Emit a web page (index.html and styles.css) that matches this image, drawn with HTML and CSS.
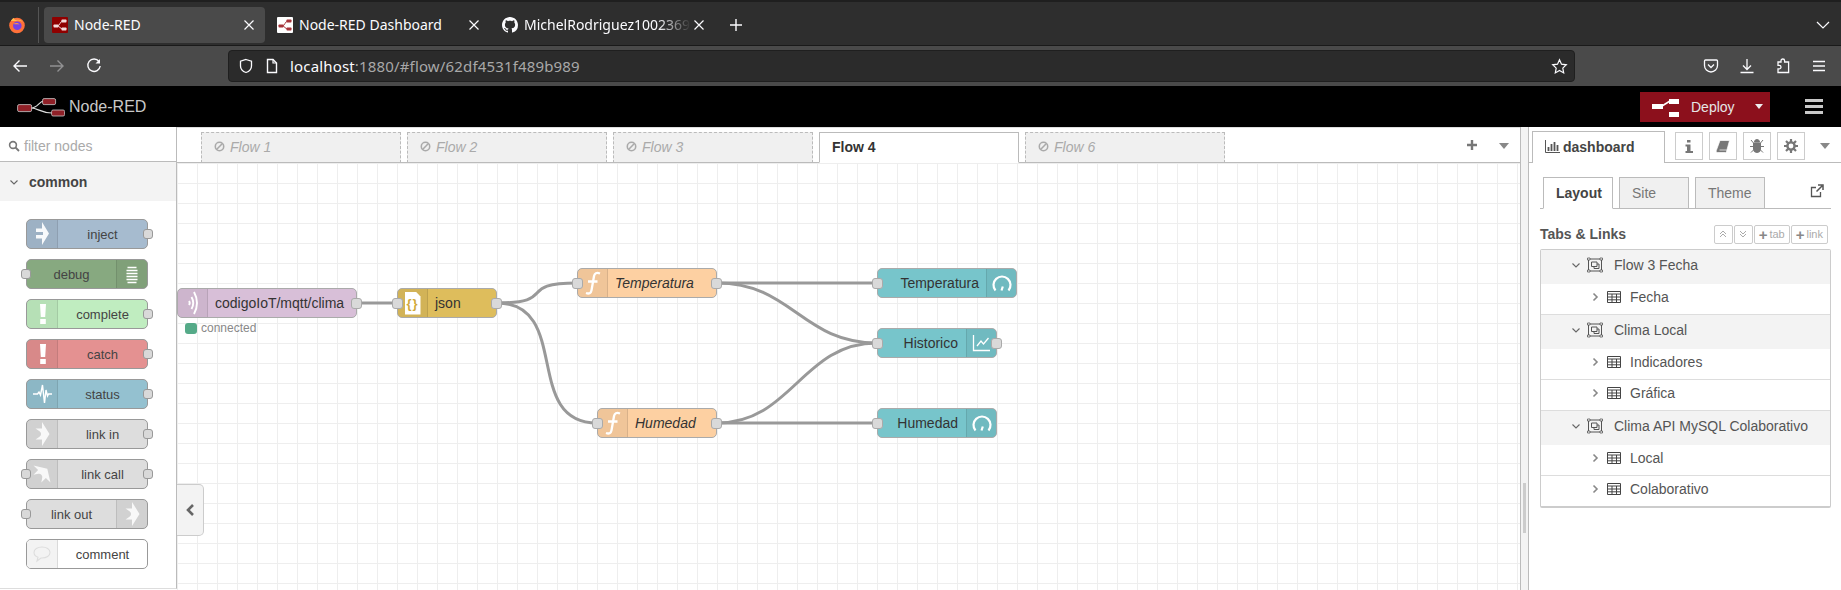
FILE: index.html
```html
<!DOCTYPE html>
<html lang="en">
<head>
  <meta charset="UTF-8">
  <meta name="viewport" content="width=device-width, initial-scale=1.0">
  <title>Node-RED</title>
  <link rel="stylesheet" href="styles.css">
</head>
<body>
  <svg class="defs" width="0" height="0">
    <symbol id="i-close" viewBox="0 0 16 16"><path d="M3.500 3.500l9 9M12.500 3.500l-9 9" fill="none" stroke="currentColor" stroke-width="1.200"/></symbol>
    <symbol id="i-nr" viewBox="0 0 16 16"><path d="M5 9c3 0 3-5 6-5M5 9c3 0 3 3 6 3" fill="none" stroke="currentColor" stroke-width="1"/><rect x="1.500" y="7.500" width="5" height="3" rx=".7" fill="currentColor"/><rect x="9.500" y="2.500" width="5" height="3" rx=".7" fill="currentColor"/><rect x="9.500" y="10.500" width="5" height="3" rx=".7" fill="currentColor"/></symbol>
    <symbol id="i-inject" viewBox="0 0 30 30"><path d="M15 3l7 11.500L15 26v-6.500H9V16h7v-3H9V9.500h6z" fill="#fff" opacity=".92"/></symbol>
    <symbol id="i-link" viewBox="0 0 30 30"><path d="M15 3l7.500 12L15 27v-6.500H8.500l4-2.700a3.300 3.300 0 0 0 0-5.600l-4-2.700H15z" fill="#fff" opacity=".85"/></symbol>
    <symbol id="i-bang" viewBox="0 0 30 30"><path d="M13 5h6l-.8 13h-4.400zM13.200 20h5.600v5h-5.600z" fill="#fff"/></symbol>
    <symbol id="i-func" viewBox="0 0 30 30"><path d="M22 5.500c-3.500-1.300-5.500-.3-6 2.700l-2.500 14c-.5 3-2.500 4-5.500 2.800M10 13.500h9.500" fill="none" stroke="#fff" stroke-width="2.300"/></symbol>
    <symbol id="i-gauge" viewBox="0 0 30 30"><path d="M8.500 22.500a8.500 8.500 0 1 1 13 0M14.500 22.500l1.300-4" fill="none" stroke="#fff" stroke-width="2.200"/></symbol>
    <symbol id="i-off" viewBox="0 0 12 12"><circle cx="6" cy="6" r="4.600" fill="none" stroke="#aaa" stroke-width="1.700"/><path d="M2.800 9.200l6.400-6.400" stroke="#aaa" stroke-width="1.700"/></symbol>
    <symbol id="i-down" viewBox="0 0 10 10"><path d="M1.500 3.500L5 7l3.500-3.500" fill="none" stroke="#666" stroke-width="1.100"/></symbol>
    <symbol id="i-right" viewBox="0 0 10 10"><path d="M3.500 1.500L7 5 3.500 8.500" fill="none" stroke="#888" stroke-width="1.600"/></symbol>
    <symbol id="i-group" viewBox="0 0 16 16"><path d="M1.500 2h13v12h-13z" fill="none" stroke="#555"/><path d="M4.500 5h5.500v4.500H4.500zM7 9.500V11.500h5V7h-2" fill="none" stroke="#555"/><path d="M.5 1h2.500v2H.5zM13 1h2.500v2H13zM.5 13h2.500v2H.5zM13 13h2.500v2H13z" fill="#fff" stroke="#555" stroke-width=".8"/></symbol>
    <symbol id="i-table" viewBox="0 0 14 12"><path d="M.5.500h13v11H.5zM.5 3h13M.5 6h13M.5 8.800h13M5 3v8.500M9.500 3v8.500" fill="none" stroke="#444" stroke-width="1"/></symbol>
  </svg>

  <div class="tabbar">
    <div class="ff-box">
      <svg width="18" height="18" viewBox="0 0 18 18"><circle cx="9" cy="9.500" r="7.800" fill="#ff7139"/><path d="M3 5c1-2 2-3 3-3 0 1 1 2 2 2 3-1 6 0 7.500 3C14 5 11 4 8 5z" fill="#ffbd4f"/><circle cx="9.300" cy="9.800" r="4.300" fill="#7542e5"/><path d="M5.500 8c2-1.500 5-1 6 .5-2-.5-4 0-6-.5z" fill="#ff9640"/></svg>
    </div>
    <div class="tab tab-active">
      <svg class="favicon fav-red" width="16" height="16"><use href="#i-nr"/></svg>
      <span class="tab-title">Node-RED</span>
      <svg class="tab-x" width="16" height="16"><use href="#i-close"/></svg>
    </div>
    <div class="tab">
      <svg class="favicon fav-white" width="16" height="16"><use href="#i-nr"/></svg>
      <span class="tab-title">Node-RED Dashboard</span>
      <svg class="tab-x" width="16" height="16"><use href="#i-close"/></svg>
    </div>
    <div class="tab">
      <svg class="favicon" width="16" height="16" viewBox="0 0 16 16"><path fill="#fbfbfe" d="M8 0C3.580 0 0 3.580 0 8c0 3.540 2.290 6.530 5.470 7.590.4.070.55-.17.55-.38 0-.19-.01-.82-.01-1.490-2.010.37-2.530-.49-2.690-.94-.09-.23-.48-.94-.82-1.130-.28-.15-.68-.52-.01-.53.63-.01 1.080.58 1.230.82.72 1.210 1.870.87 2.330.66.070-.52.28-.87.51-1.070-1.780-.2-3.640-.89-3.640-3.950 0-.87.31-1.590.82-2.150-.08-.2-.36-1.020.08-2.120 0 0 .67-.21 2.200.82.64-.18 1.320-.27 2-.27.68 0 1.360.09 2 .27 1.530-1.040 2.200-.82 2.200-.82.44 1.100.16 1.920.08 2.120.51.56.82 1.270.82 2.150 0 3.070-1.870 3.750-3.650 3.950.29.25.54.73.54 1.480 0 1.070-.01 1.930-.01 2.200 0 .21.15.46.55.38A8.013 8.013 0 0016 8c0-4.420-3.580-8-8-8z"/></svg>
      <span class="tab-title tab-fade">MichelRodriguez1002369</span>
      <svg class="tab-x" width="16" height="16"><use href="#i-close"/></svg>
    </div>
    <svg class="new-tab" width="16" height="16" viewBox="0 0 16 16"><path d="M8 2v12M2 8h12" stroke="#fbfbfe" stroke-width="1.400"/></svg>
    <svg class="all-tabs" width="16" height="16" viewBox="0 0 16 16"><path d="M2 5l6 6 6-6" fill="none" stroke="#fbfbfe" stroke-width="1.200"/></svg>
  </div>

  <div class="navbar">
    <svg class="nav-ic" width="16" height="16" viewBox="0 0 16 16"><path d="M15 8H2M7.500 2.500L2 8l5.500 5.500" fill="none" stroke="#fbfbfe" stroke-width="1.400"/></svg>
    <svg class="nav-ic dim" width="16" height="16" viewBox="0 0 16 16"><path d="M1 8h13M8.500 2.500L14 8l-5.500 5.500" fill="none" stroke="#fbfbfe" stroke-width="1.400"/></svg>
    <svg class="nav-ic" width="16" height="16" viewBox="0 0 16 16"><path d="M13 3.500A6.200 6.200 0 1 0 14.200 8" fill="none" stroke="#fbfbfe" stroke-width="1.400"/><path d="M14 1v4.500H9.500z" fill="#fbfbfe"/></svg>
    <div class="urlbar">
      <svg class="url-shield" width="16" height="16" viewBox="0 0 16 16"><path d="M8 1.500l5.500 1.700V8c0 3.300-2.500 5.500-5.500 6.500C5 13.500 2.500 11.300 2.500 8V3.200z" fill="none" stroke="#fbfbfe" stroke-width="1.300"/></svg>
      <svg class="url-page" width="14" height="16" viewBox="0 0 14 16"><path d="M2.500 1.500h5.500l3.500 3.500v9.500h-9z" fill="none" stroke="#fbfbfe" stroke-width="1.400"/><path d="M8 1.500v3.500h3.500" fill="none" stroke="#fbfbfe" stroke-width="1.200"/></svg>
      <span class="url-text">localhost<span class="url-dim">:1880/#flow/62df4531f489b989</span></span>
      <svg class="url-star" width="17" height="17" viewBox="0 0 17 17"><path d="M8.500 1.800l2 4.400 4.800.6-3.500 3.300.9 4.800-4.200-2.400-4.200 2.400.9-4.800L1.700 6.800l4.800-.6z" fill="none" stroke="#fbfbfe" stroke-width="1.200"/></svg>
    </div>
    <div class="nav-right">
      <svg width="16" height="16" viewBox="0 0 16 16"><path d="M2.500 2h11c.6 0 1 .4 1 1v4.500c0 3.500-3 6.500-6.500 6.500s-6.500-3-6.500-6.500V3c0-.6.4-1 1-1z" fill="none" stroke="#fbfbfe" stroke-width="1.300"/><path d="M5 6.500l3 3 3-3" fill="none" stroke="#fbfbfe" stroke-width="1.300"/></svg>
      <svg width="16" height="16" viewBox="0 0 16 16"><path d="M8 1v10M4 7.500L8 11.500l4-4M1.500 14.500h13" fill="none" stroke="#fbfbfe" stroke-width="1.300"/></svg>
      <svg width="16" height="16" viewBox="0 0 16 16"><path d="M6 4V2.800a1.800 1.800 0 0 1 3.600 0V4h4v10.500H3v-3.600h1.200a1.800 1.800 0 0 0 0-3.600H3V4z" fill="none" stroke="#fbfbfe" stroke-width="1.300"/></svg>
      <svg width="16" height="16" viewBox="0 0 16 16"><path d="M2 3.500h12M2 8h12M2 12.500h12" stroke="#fbfbfe" stroke-width="1.300"/></svg>
    </div>
  </div>

  <header class="nr-header">
    <div class="logo">
      <svg width="48" height="20" viewBox="0 0 48 20"><path d="M14 11c7 0 8-7 13-7M14 11c7 0 10 5 21 5" fill="none" stroke="#ddd" stroke-width="1.200"/><rect x=".6" y="7.600" width="14" height="7" rx="1.500" fill="#8f2027" stroke="#ccc" stroke-width=".8"/><rect x="25.600" y="1.600" width="13" height="6" rx="1.500" fill="#8f2027" stroke="#ccc" stroke-width=".8"/><rect x="34.600" y="13" width="13" height="6" rx="1.500" fill="#8f2027" stroke="#ccc" stroke-width=".8"/></svg>
      <span>Node-RED</span>
    </div>
    <div class="deploy">
      <svg width="28" height="20" viewBox="0 0 28 20"><path d="M10 9l8-5" stroke="#fff" stroke-width="1.500"/><rect x="0" y="7" width="11" height="5" fill="#fff"/><rect x="17" y="2" width="10" height="5" fill="#fff"/><rect x="17" y="15" width="10" height="5" fill="#fff"/></svg>
      <span class="deploy-label">Deploy</span>
      <span class="deploy-caret"></span>
    </div>
    <div class="hamburger"><i></i><i></i><i></i></div>
  </header>

  <main class="app">
    <aside class="palette">
      <div class="filter">
        <svg width="12" height="12" viewBox="0 0 12 12"><circle cx="5" cy="5" r="3.400" fill="none" stroke="#777" stroke-width="1.600"/><path d="M7.500 7.500L11 11" stroke="#777" stroke-width="1.800"/></svg>
        <span>filter nodes</span>
      </div>
      <div class="cat-head">
        <svg width="10" height="10"><use href="#i-down"/></svg>
        <span>common</span>
      </div>
      <div class="cat-body">
        <div class="pnode c-inject"><span class="ic"><svg width="30" height="30"><use href="#i-inject"/></svg></span><span class="lbl">inject</span><b class="port out"></b></div>
        <div class="pnode c-debug"><b class="port in"></b><span class="lbl">debug</span><span class="ic ic-right"><svg width="30" height="30" viewBox="0 0 30 30"><path d="M10.500 8.500h9M9.500 11.500h11M9.500 14.500h11M9.500 17.500h11M9.500 20.500h11M10.500 23.500h9" stroke="#fff" stroke-width="1.500"/></svg></span></div>
        <div class="pnode c-complete"><span class="ic"><svg width="30" height="30"><use href="#i-bang"/></svg></span><span class="lbl">complete</span><b class="port out"></b></div>
        <div class="pnode c-catch"><span class="ic"><svg width="30" height="30"><use href="#i-bang"/></svg></span><span class="lbl">catch</span><b class="port out"></b></div>
        <div class="pnode c-status"><span class="ic"><svg width="30" height="30" viewBox="0 0 30 30"><path d="M6 15h4.500l1.500-2 1.500 3 2-10 2 18 1.500-13 1.500 6 1-2h3.500" fill="none" stroke="#fff" stroke-width="1.400"/></svg></span><span class="lbl">status</span><b class="port out"></b></div>
        <div class="pnode c-link"><span class="ic"><svg width="30" height="30"><use href="#i-link"/></svg></span><span class="lbl">link in</span><b class="port out"></b></div>
        <div class="pnode c-link"><b class="port in"></b><span class="ic"><svg class="rot" width="30" height="30"><use href="#i-link"/></svg></span><span class="lbl">link call</span><b class="port out"></b></div>
        <div class="pnode c-link"><b class="port in"></b><span class="lbl">link out</span><span class="ic ic-right"><svg width="30" height="30"><use href="#i-link"/></svg></span></div>
        <div class="pnode c-comment"><span class="ic"><svg width="30" height="30" viewBox="0 0 30 30"><path d="M15 8c4.500 0 8 2.300 8 5.500S19.500 19 15 19h-1l-4 3 1-3.800C8.500 17.300 7 15.600 7 13.500 7 10.300 10.500 8 15 8z" fill="none" stroke="#ddd" stroke-width="1.100"/></svg></span><span class="lbl">comment</span></div>
      </div>
    </aside>

    <section class="workspace">
      <div class="ws-tabs">
        <div class="ws-tab off"><svg width="11" height="11"><use href="#i-off"/></svg>Flow 1</div>
        <div class="ws-tab off"><svg width="11" height="11"><use href="#i-off"/></svg>Flow 2</div>
        <div class="ws-tab off"><svg width="11" height="11"><use href="#i-off"/></svg>Flow 3</div>
        <div class="ws-tab on">Flow 4</div>
        <div class="ws-tab off"><svg width="11" height="11"><use href="#i-off"/></svg>Flow 6</div>
        <svg class="ws-plus" width="12" height="12" viewBox="0 0 12 12"><path d="M6 1v10M1 6h10" stroke="#777" stroke-width="2.400"/></svg>
        <span class="caret ws-caret"></span>
      </div>
      <div class="canvas">
        <svg class="wires" width="1343" height="427" viewBox="177 163 1343 427">
          <path d="M357 303H397"/>
          <path d="M497 303C559 303 515 283 577 283"/>
          <path d="M497 303C572 303 522 423 597 423"/>
          <path d="M717 283H877"/>
          <path d="M717 283C792 283 802 343 877 343"/>
          <path d="M717 423C792 423 802 343 877 343"/>
          <path d="M717 423H877"/>
        </svg>

        <div class="fnode n-mqtt"><b class="port out"></b><span class="ic"><svg width="30" height="30" viewBox="0 0 30 30"><path d="M16 4q6 11 0 22M13.500 9q3.500 6 0 12M11 13q1.500 2 0 4" fill="none" stroke="#fff" stroke-width="1.900"/></svg></span><span class="lbl">codigoIoT/mqtt/clima</span></div>
        <div class="status"><i></i>connected</div>

        <div class="fnode n-json"><b class="port in"></b><b class="port out"></b><span class="ic"><span class="doc">{}</span></span><span class="lbl">json</span></div>

        <div class="fnode n-func n-temp"><b class="port in"></b><b class="port out"></b><span class="ic"><svg width="30" height="30"><use href="#i-func"/></svg></span><span class="lbl">Temperatura</span></div>
        <div class="fnode n-func n-hum"><b class="port in"></b><b class="port out"></b><span class="ic"><svg width="30" height="30"><use href="#i-func"/></svg></span><span class="lbl">Humedad</span></div>

        <div class="fnode n-ui n-gtemp"><b class="port in"></b><span class="lbl">Temperatura</span><span class="ic ic-right"><svg width="30" height="30"><use href="#i-gauge"/></svg></span></div>
        <div class="fnode n-ui n-hist"><b class="port in"></b><b class="port out"></b><span class="lbl">Historico</span><span class="ic ic-right"><svg width="30" height="30" viewBox="0 0 30 30"><path d="M6.500 7v15.500H23M10 18l4-5 2.500 3 5-6" fill="none" stroke="#fff" stroke-width="1.300"/></svg></span></div>
        <div class="fnode n-ui n-ghum"><b class="port in"></b><span class="lbl">Humedad</span><span class="ic ic-right"><svg width="30" height="30"><use href="#i-gauge"/></svg></span></div>

        <div class="palette-toggle">
          <svg width="10" height="14" viewBox="0 0 10 14"><path d="M8 2L3 7l5 5" fill="none" stroke="#666" stroke-width="2.600"/></svg>
        </div>
      </div>
    </section>

    <div class="separator"><i></i></div>

    <aside class="sidebar">
      <div class="side-tabs">
        <div class="side-tab">
          <svg width="15" height="13" viewBox="0 0 15 13"><path d="M.5 0v12.500H15" fill="none" stroke="#555" stroke-width="1"/><path d="M3.500 7v4M6.500 4v7M9.500 2v9M12.500 5v6" stroke="#555" stroke-width="1.800"/></svg>
          dashboard
        </div>
        <div class="side-btn"><svg width="8" height="13" viewBox="0 0 8 13"><path d="M2 0h3.500v2.500H2zM.5 4.500h5V11H8v2H.5v-2H2V6.500H.5z" fill="#777"/></svg></div>
        <div class="side-btn"><svg width="14" height="13" viewBox="0 0 14 13"><path d="M4 .5h9.500L10.500 11.500c-.3 1-1 1-1.500 1H1.500C.5 12.500 0 11.500.3 10.500zM3.500 10h7.300" fill="#777" stroke="#fff" stroke-width=".7"/></svg></div>
        <div class="side-btn"><svg width="14" height="14" viewBox="0 0 14 14"><path d="M4.500 3a2.500 2.500 0 0 1 5 0zM3.500 4h7v6a3.500 3.500 0 0 1-7 0zM1 1l2.500 3M13 1l-2.500 3M0 7.500h3.500M10.500 7.500H14M1 13.500l3-3M13 13.500l-3-3" fill="#777" stroke="#777" stroke-width="1"/></svg></div>
        <div class="side-btn"><svg width="14" height="14" viewBox="0 0 14 14"><circle cx="7" cy="7" r="3.600" fill="none" stroke="#777" stroke-width="2.400"/><path d="M7 0v3M7 11v3M0 7h3M11 7h3M2 2l2.200 2.200M9.800 9.800L12 12M12 2L9.800 4.200M4.200 9.800L2 12" stroke="#777" stroke-width="2.200"/></svg></div>
        <span class="caret side-caret"></span>
      </div>

      <div class="dash">
        <div class="dash-tabs">
          <div class="dash-tab on">Layout</div>
          <div class="dash-tab">Site</div>
          <div class="dash-tab">Theme</div>
          <svg class="ext" width="14" height="14" viewBox="0 0 14 14"><path d="M10.500 8v4.500h-9v-9H6" fill="none" stroke="#555" stroke-width="1.300"/><path d="M6.500 7.500L12 2M8 1h5v5" fill="none" stroke="#555" stroke-width="1.500"/></svg>
        </div>

        <div class="links-head">
          <span class="links-title">Tabs &amp; Links</span>
          <div class="links-btns">
            <span class="mini mini-ch"><svg width="8" height="8" viewBox="0 0 8 8"><path d="M1 4l3-3 3 3M1 7l3-3 3 3" fill="none" stroke="#aaa" stroke-width="1"/></svg></span>
            <span class="mini mini-ch"><svg width="8" height="8" viewBox="0 0 8 8"><path d="M1 1l3 3 3-3M1 4l3 3 3-3" fill="none" stroke="#aaa" stroke-width="1"/></svg></span>
            <span class="mini"><b>+</b>tab</span>
            <span class="mini"><b>+</b>link</span>
          </div>
        </div>

        <ul class="tree">
          <li class="tree-tab"><svg class="chev" width="10" height="10"><use href="#i-down"/></svg><svg class="grp" width="16" height="16"><use href="#i-group"/></svg>Flow 3 Fecha</li>
          <li class="tree-group"><svg class="chev" width="10" height="10"><use href="#i-right"/></svg><svg class="tbl" width="14" height="12"><use href="#i-table"/></svg>Fecha</li>
          <li class="tree-tab"><svg class="chev" width="10" height="10"><use href="#i-down"/></svg><svg class="grp" width="16" height="16"><use href="#i-group"/></svg>Clima Local</li>
          <li class="tree-group"><svg class="chev" width="10" height="10"><use href="#i-right"/></svg><svg class="tbl" width="14" height="12"><use href="#i-table"/></svg>Indicadores</li>
          <li class="tree-group"><svg class="chev" width="10" height="10"><use href="#i-right"/></svg><svg class="tbl" width="14" height="12"><use href="#i-table"/></svg>Gráfica</li>
          <li class="tree-tab"><svg class="chev" width="10" height="10"><use href="#i-down"/></svg><svg class="grp" width="16" height="16"><use href="#i-group"/></svg>Clima API MySQL Colaborativo</li>
          <li class="tree-group"><svg class="chev" width="10" height="10"><use href="#i-right"/></svg><svg class="tbl" width="14" height="12"><use href="#i-table"/></svg>Local</li>
          <li class="tree-group last"><svg class="chev" width="10" height="10"><use href="#i-right"/></svg><svg class="tbl" width="14" height="12"><use href="#i-table"/></svg>Colaborativo</li>
        </ul>
      </div>
    </aside>
  </main>
</body>
</html>
```

FILE: styles.css
```css
* {
  box-sizing: border-box;
}
html, body {
  height: 100%;
}
body {
  margin: 0;
  overflow: hidden;
  font-family: "Liberation Sans", Arial, sans-serif;
  font-size: 14px;
  color: #555;
  background: #fff;
}
.defs {
  position: absolute;
}

/* browser chrome */
.tabbar {
  height: 46px;
  display: flex;
  align-items: center;
  gap: 4px;
  padding-top: 2px;
  background: #2e2e2e;
  border-top: 2px solid #1f1f1f;
  border-bottom: 1px solid #1a1a1a;
  font-family: "Noto Sans", sans-serif;
  font-size: 14px;
  color: #fbfbfe;
}
.ff-box {
  width: 39px;
  height: 36px;
  margin-right: 1px;
  padding-right: 5px;
  display: flex;
  align-items: center;
  justify-content: center;
  border-right: 1px solid #555;
}
.tab {
  width: 221px;
  height: 36px;
  flex: none;
  display: flex;
  align-items: center;
  padding: 0 8px;
  border-radius: 4px;
}
.tab-active {
  background: #4a4a4a;
}
.favicon {
  flex: none;
  margin-right: 6px;
}
.fav-red {
  background: #8f0000;
  color: #f3dada;
  border-radius: 1px;
}
.fav-white {
  background: #fff;
  color: #a6343a;
  border-radius: 1px;
}
.tab-title {
  flex: 1;
  white-space: nowrap;
  overflow: hidden;
}
.tab-fade {
  -webkit-mask-image: linear-gradient(to right, #000 80%, transparent);
  mask-image: linear-gradient(to right, #000 80%, transparent);
}
.tab-x {
  flex: none;
  color: #fbfbfe;
}
.new-tab {
  margin-left: 9px;
}
.all-tabs {
  margin-left: auto;
  margin-right: 10px;
}
.navbar {
  height: 40px;
  display: flex;
  align-items: center;
  gap: 21px;
  padding: 0 14px 0 12px;
  background: #4a4a4a;
}
.nav-ic {
  flex: none;
}
.nav-ic.dim {
  opacity: 0.4;
}
.urlbar {
  width: 1347px;
  height: 32px;
  margin-left: 105px;
  flex: none;
  display: flex;
  align-items: center;
  padding: 0 6px 0 9px;
  background: #2b2b2b;
  border: 1px solid #1f1f1f;
  border-radius: 4px;
  font-family: "Noto Sans", sans-serif;
  font-size: 15px;
  letter-spacing: 0.16px;
  color: #fbfbfe;
}
.url-shield {
  margin-right: 11px;
}
.url-page {
  margin-right: 11px;
}
.url-dim {
  color: #a8a8a8;
}
.url-star {
  margin-left: auto;
}
.nav-right {
  margin-left: auto;
  display: flex;
  gap: 20px;
}

/* node-red header */
.nr-header {
  height: 41px;
  display: flex;
  align-items: center;
  background: #000;
  padding: 0 18px 0 17px;
}
.logo {
  display: flex;
  align-items: center;
  gap: 4px;
  font-size: 16px;
  color: #c8c8c8;
}
.deploy {
  width: 130px;
  height: 30px;
  margin-left: auto;
  display: flex;
  align-items: center;
  padding-left: 12px;
  background: #8c101c;
  color: #e6e6e6;
}
.deploy-label {
  margin-left: 11px;
}
.deploy-caret {
  margin-left: 20px;
  border-left: 4px solid transparent;
  border-right: 4px solid transparent;
  border-top: 5px solid #eee;
}
.hamburger {
  width: 18px;
  margin-left: 35px;
  display: flex;
  flex-direction: column;
  gap: 3px;
}
.hamburger i {
  height: 3px;
  background: #c8c8c8;
}

/* main area */
.app {
  height: 463px;
  display: flex;
}
.palette {
  width: 177px;
  flex: none;
  border-right: 1px solid #bbb;
  border-bottom: 1px solid #ddd;
  height: 462px;
  display: flex;
  flex-direction: column;
  background: #fff;
}
.filter {
  height: 35px;
  flex: none;
  display: flex;
  align-items: center;
  gap: 4px;
  padding: 4px 0 0 8px;
  border-bottom: 1px solid #bbb;
  color: #aaa;
}
.cat-head {
  height: 39px;
  flex: none;
  display: flex;
  align-items: center;
  gap: 10px;
  padding-left: 9px;
  background: #f3f3f3;
  font-weight: bold;
  color: #444;
}
.cat-body {
  display: flex;
  flex-direction: column;
  gap: 10px;
  padding: 18px 0 0 26px;
}
.pnode {
  position: relative;
  width: 122px;
  height: 30px;
  display: flex;
  align-items: center;
  border: 1px solid #999;
  border-radius: 5px;
  font-size: 13px;
  color: #444;
}
.pnode .lbl {
  flex: 1;
  text-align: center;
}
.ic {
  flex: none;
  width: 31px;
  height: 100%;
  display: flex;
  align-items: center;
  justify-content: center;
  background: rgba(0, 0, 0, 0.05);
  border-right: 1px solid rgba(0, 0, 0, 0.1);
  border-radius: 4px 0 0 4px;
}
.ic svg {
  flex: none;
}
.ic-right {
  border-right: 0;
  border-left: 1px solid rgba(0, 0, 0, 0.1);
  border-radius: 0 4px 4px 0;
}
.rot {
  transform: rotate(-45deg);
}
.port {
  position: absolute;
  top: 50%;
  width: 10px;
  height: 10px;
  margin-top: -5px;
  background: #d9d9d9;
  border: 1px solid #999;
  border-radius: 3px;
  z-index: 1;
}
.port.out {
  right: -6px;
}
.port.in {
  left: -6px;
}
.c-inject { background: #a6bbcf; }
.c-debug { background: #87a980; }
.c-complete { background: #c0edc0; }
.c-catch { background: #e49191; }
.c-status { background: #94c1d0; }
.c-link { background: #ddd; }
.c-comment { background: #fff; }
.c-comment .ic { background: #f3f3f3; }

/* workspace */
.workspace {
  width: 1343px;
  flex: none;
  display: flex;
  flex-direction: column;
}
.ws-tabs {
  height: 36px;
  flex: none;
  display: flex;
  align-items: flex-end;
  gap: 6px;
  padding-left: 24px;
  border-top: 1px solid #ddd;
  border-bottom: 1px solid #bbb;
  background: #fff;
}
.ws-tab {
  width: 200px;
  height: 31px;
  flex: none;
  margin-bottom: -1px;
  display: flex;
  align-items: center;
  gap: 5px;
  padding: 0 12px 2px;
  border: 1px solid #bbb;
}
.ws-tab.off {
  background: #f0f0f0;
  border-style: dashed;
  border-bottom-style: solid;
  color: #aaa;
  font-style: italic;
}
.ws-tab.on {
  background: #fff;
  border-bottom-color: #fff;
  color: #333;
  font-weight: bold;
}
.ws-plus {
  margin: 0 0 11px 235px;
}
.caret {
  width: 0;
  height: 0;
  border-left: 5px solid transparent;
  border-right: 5px solid transparent;
  border-top: 6px solid #888;
}
.ws-caret {
  margin: 0 0 13px 15px;
}
.canvas {
  position: relative;
  flex: 1;
  overflow: hidden;
  background-color: #fff;
  background-image:
    linear-gradient(to right, #eee 1px, transparent 1px),
    linear-gradient(to bottom, #eee 1px, transparent 1px);
  background-size: 20px 20px;
}
.wires {
  position: absolute;
  left: 0;
  top: 0;
}
.wires path {
  fill: none;
  stroke: #999;
  stroke-width: 3;
}
.fnode {
  position: absolute;
  height: 30px;
  display: flex;
  align-items: center;
  border: 1px solid #aaa;
  border-radius: 5px;
  color: #333;
}
.fnode .port {
  width: 11px;
  height: 11px;
  margin-top: -5.5px;
  border-color: #aaa;
}
.fnode .lbl {
  flex: 1;
  padding-left: 7px;
  white-space: nowrap;
}
.fnode .ic {
  width: 30px;
}
.fnode .ic-right {
  width: 30px;
}
.n-mqtt { left: 0; top: 125px; width: 180px; background: #d8bfd8; }
.n-json { left: 220px; top: 125px; width: 100px; background: #debd5c; }
.n-func { background: #fdd0a2; font-style: italic; }
.n-temp { left: 400px; top: 105px; width: 140px; }
.n-hum { left: 420px; top: 245px; width: 120px; }
.n-ui { background: #77c5cb; left: 700px; }
.n-ui .lbl {
  padding: 0 8px 0 0;
  text-align: right;
}
.n-gtemp { top: 105px; width: 140px; }
.n-gtemp .lbl { padding-right: 7px; }
.n-hist { top: 165px; width: 120px; }
.n-ghum { top: 245px; width: 120px; }
.status {
  position: absolute;
  left: 8px;
  top: 158px;
  display: flex;
  align-items: center;
  gap: 4px;
  font-size: 12px;
  color: #888;
}
.status i {
  width: 12px;
  height: 11px;
  background: #5a8;
  border-radius: 3px;
}
.doc {
  width: 16px;
  height: 23px;
  display: flex;
  align-items: center;
  justify-content: center;
  background: #fff;
  clip-path: polygon(0 0, 70% 0, 100% 22%, 100% 100%, 0 100%);
  color: #d1a93a;
  font-size: 13px;
  font-weight: bold;
  letter-spacing: 1px;
}
.palette-toggle {
  position: absolute;
  left: 0;
  top: 321px;
  width: 27px;
  height: 52px;
  display: flex;
  align-items: center;
  justify-content: center;
  background: #f3f3f3;
  border: 1px solid #ccc;
  border-left: 0;
  border-radius: 0 5px 5px 0;
}
.separator {
  position: relative;
  width: 9px;
  flex: none;
  background: #f3f3f3;
  border-left: 1px solid #bbb;
  border-right: 1px solid #bbb;
}
.separator i {
  position: absolute;
  left: 2px;
  top: 356px;
  width: 3px;
  height: 50px;
  background: #ccc;
}

/* sidebar */
.sidebar {
  width: 312px;
  flex: none;
  background: #fff;
}
.side-tabs {
  height: 36px;
  display: flex;
  align-items: flex-end;
  gap: 6px;
  padding-left: 3px;
  border-bottom: 1px solid #bbb;
}
.side-tab {
  width: 133px;
  height: 32px;
  flex: none;
  margin: 0 4px -1px 0;
  display: flex;
  align-items: center;
  gap: 3px;
  padding: 0 0 2px 12px;
  background: #fff;
  border: 1px solid #bbb;
  border-bottom: 0;
  font-weight: bold;
  color: #444;
}
.side-btn {
  width: 28px;
  height: 28px;
  flex: none;
  margin-bottom: 2px;
  display: flex;
  align-items: center;
  justify-content: center;
  border: 1px solid #ccc;
}
.side-caret {
  margin: 0 0 13px 9px;
}
.dash {
  padding: 14px 10px 0 11px;
}
.dash-tabs {
  height: 32px;
  display: flex;
  align-items: flex-end;
  gap: 6px;
  padding-left: 3px;
  border-bottom: 1px solid #bbb;
}
.dash-tab {
  width: 70px;
  height: 32px;
  flex: none;
  margin-bottom: -1px;
  display: flex;
  align-items: center;
  padding-left: 12px;
  background: #f0f0f0;
  border: 1px solid #bbb;
  color: #777;
}
.dash-tab.on {
  background: #fff;
  border-bottom-color: #fff;
  font-weight: bold;
  color: #444;
}
.ext {
  margin: 0 7px 10px auto;
}
.links-head {
  height: 40px;
  display: flex;
  align-items: center;
  justify-content: space-between;
  padding: 10px 3px 0 0;
}
.links-title {
  font-weight: bold;
  color: #555;
}
.links-btns {
  display: flex;
  gap: 1px;
}
.mini {
  height: 19px;
  display: flex;
  align-items: center;
  gap: 2px;
  padding: 0 4px;
  border: 1px solid #ccc;
  border-radius: 2px;
  font-size: 11px;
  color: #aaa;
}
.mini b {
  font-size: 15px;
  color: #888;
}
.mini-ch {
  width: 19px;
  justify-content: center;
}
.tree {
  list-style: none;
  margin: 0;
  padding: 0;
  border: 1px solid #ccc;
  border-bottom: 2px solid #ccc;
  border-radius: 2px;
}
.tree li {
  display: flex;
  align-items: center;
  padding-bottom: 4px;
  color: #555;
  white-space: nowrap;
}
.tree-tab {
  height: 34px;
  padding-left: 30px;
  background: #f3f3f3;
}
.tree-tab .chev {
  margin-right: 6px;
}
.tree-tab .grp {
  margin-right: 11px;
}
.tree-group {
  height: 31px;
  padding-left: 49px;
  border-bottom: 1px solid #ddd;
}
.tree-group.last {
  height: 30px;
  border-bottom: 0;
}
.tree-group .chev {
  margin-right: 7px;
}
.tree-group .tbl {
  margin-right: 9px;
}
```
